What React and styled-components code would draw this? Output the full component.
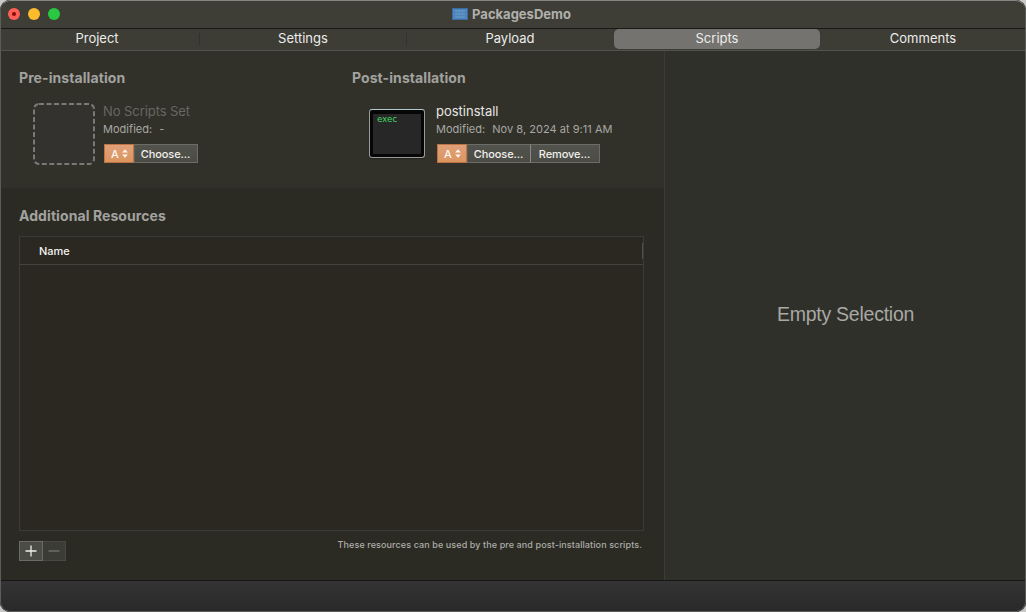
import React from "react";
import styled, { createGlobalStyle } from "styled-components";

const GlobalStyle = createGlobalStyle`
  * { box-sizing: border-box; }
  body { margin: 0; background: #c9c9c7; font-family: Inter, "Liberation Sans", sans-serif; }
`;

const Window = styled.div`
  position: relative;
  display: flex;
  flex-direction: column;
  width: 1026px;
  height: 612px;
  overflow: hidden;
  border-radius: 10px;
  background: #30302a;

  &::after {
    content: "";
    position: absolute;
    inset: 0;
    z-index: 2;
    border: 1px solid #5c5d59;
    border-top-color: #858681;
    border-radius: 10px;
    pointer-events: none;
  }
`;

const TitleBar = styled.header`
  display: grid;
  grid-template-columns: 1fr auto 1fr;
  align-items: center;
  height: 29px;
  padding: 0 11px 0 8px;
  border-bottom: 1px solid #191917;
  background: #3e3e37;
`;

const Lights = styled.div`
  display: flex;
  gap: 8px;
`;

const Light = styled.span`
  display: grid;
  place-items: center;
  width: 12px;
  height: 12px;
  border-radius: 50%;
  background: ${(p) => p.$color};
`;

const EditedDot = styled.span`
  width: 4px;
  height: 4px;
  border-radius: 50%;
  background: #8a0a06;
`;

const Title = styled.h1`
  display: flex;
  align-items: center;
  gap: 4px;
  margin: 0;
  padding-bottom: 1px;
  color: #b0b0ac;
  font-size: 13px;
  font-weight: 700;
  line-height: 16px;
`;

const Tabs = styled.nav`
  display: grid;
  grid-template-columns: 200px 207px 207px 206px 206px;
  height: 21px;
  background: #3d3d36;
  box-shadow: 0 1px 0 #52534d;
  z-index: 1;
`;

const Tab = styled.button`
  display: flex;
  align-items: center;
  justify-content: center;
  height: 20px;
  padding: 0 ${(p) => p.$inset || 0}px 2px 0;
  border: 0;
  border-radius: ${(p) => (p.$active ? 5 : 0)}px;
  background: ${(p) =>
    p.$active
      ? "#747370"
      : p.$divider
        ? "linear-gradient(#30302c, #30302c) right 4px / 1px 12px no-repeat"
        : "none"};
  color: #ececea;
  font: 400 13px/16px Inter, sans-serif;
`;

const Body = styled.div`
  display: flex;
  flex: 1;
  min-height: 0;
`;

const Main = styled.main`
  display: flex;
  flex-direction: column;
  width: 665px;
  border-right: 1px solid #3b3b37;
  background: #2b2b24;
`;

const ScriptsSection = styled.section`
  display: grid;
  grid-template-columns: 333px 1fr;
  height: 138px;
  padding: 20px 0 0 19px;
  border-bottom: 1px solid #2f2f2b;
  background: #31312a;
`;

const Heading = styled.h2`
  margin: 0;
  color: #a2a29e;
  font-size: 14px;
  font-weight: 700;
  line-height: 16px;
  letter-spacing: 0.08px;
`;

const ScriptRow = styled.div`
  display: flex;
  gap: ${(p) => p.$gap}px;
  padding: 17px 0 0 ${(p) => p.$indent}px;
`;

const DropZone = styled.svg`
  display: block;
  width: 62px;
  height: 62px;
`;

const ExecIcon = styled.div`
  width: 56px;
  height: 49px;
  margin-top: 6px;
  padding: 3px 5px 0 7px;
  border: 1px solid #9a9b9a;
  border-top-color: #b3c9d0;
  border-radius: 3px;
  background: linear-gradient(#272727, #272727) 3px 4px / 48px 40px no-repeat #060606;
  box-shadow: 0 1px 1px #22221f;
  color: #43d565;
  font: 9px/13px "DejaVu Sans Mono", monospace;
  letter-spacing: -0.4px;
`;

const Details = styled.div`
  display: flex;
  flex-direction: column;
`;

const ScriptName = styled.div`
  color: ${(p) => (p.$empty ? "#676762" : "#e6e6e3")};
  font-size: 13px;
  line-height: 16px;
  letter-spacing: ${(p) => (p.$empty ? -0.07 : 0)}px;
`;

const Modified = styled.div`
  display: flex;
  gap: 7px;
  margin: 3px 0 8px;
  color: #a8a8a3;
  font-size: 11px;
  line-height: 14px;
  letter-spacing: 0.03px;
  white-space: nowrap;
`;

const ButtonGroup = styled.div`
  display: flex;
  height: 19px;
  margin-left: 1px;
`;

const PathMode = styled.button`
  display: flex;
  align-items: center;
  justify-content: center;
  gap: 3px;
  width: 30px;
  height: 19px;
  padding: 0 0 0 1px;
  border: 1px solid #bd7445;
  background: linear-gradient(#e0a079, #dc955f);
  color: #fff7f0;
  font: 500 11px/14px Inter, sans-serif;
`;

const ActionButton = styled.button`
  width: ${(p) => p.$width}px;
  height: 19px;
  padding: 0 1px 0 0;
  border: 1px solid #6c6c67;
  border-left-color: ${(p) => (p.$split ? "#8a8a85" : "#5e5e59")};
  border-right-width: ${(p) => (p.$joined ? 0 : 1)}px;
  background: linear-gradient(#53534e, #4c4c46);
  color: #f0f0ed;
  font: 500 11px/14px Inter, sans-serif;
  letter-spacing: -0.1px;
`;

const Resources = styled.section`
  display: flex;
  flex: 1;
  flex-direction: column;
  padding: 20px 20px 19px 19px;
`;

const Table = styled.div`
  width: 625px;
  height: 295px;
  margin-top: 12px;
  border: 1px solid #3b3c39;
  background: #2b2721;
`;

const TableHeader = styled.div`
  display: flex;
  align-items: center;
  justify-content: space-between;
  height: 28px;
  padding-left: 19px;
  border-bottom: 1px solid #43423c;
  color: #f4f4f1;
  font-size: 11px;
  font-weight: 500;
`;

const ColumnGrip = styled.span`
  width: 1px;
  height: 16px;
  background: #50504a;
`;

const TableFooter = styled.div`
  display: flex;
  justify-content: space-between;
  width: 623px;
  padding-top: 10px;
`;

const EditButtons = styled.div`
  display: flex;
`;

const EditButton = styled.button`
  display: grid;
  place-items: center;
  width: ${(p) => (p.$disabled ? 23 : 24)}px;
  height: 20px;
  padding: 0;
  border: 1px solid ${(p) => (p.$disabled ? "#484943" : "#6a6b65")};
  border-left-width: ${(p) => (p.$disabled ? 0 : 1)}px;
  background: ${(p) => (p.$disabled ? "#3b3c35" : "#4b4c46")};
  color: ${(p) => (p.$disabled ? "#6d6e68" : "#efefec")};
`;

const Note = styled.p`
  margin: -2px 0 0;
  color: #adada8;
  font-size: 9px;
  font-weight: 500;
  line-height: 12px;
  letter-spacing: 0.1px;
`;

const Inspector = styled.aside`
  display: flex;
  flex: 1;
  align-items: center;
  justify-content: center;
  padding-bottom: 2px;
  background: #30302a;
`;

const EmptyLabel = styled.p`
  margin: 0;
  color: #a8a8a4;
  font: 400 19.5px/24px "Liberation Sans", Arial, sans-serif;
  letter-spacing: -0.25px;
`;

const StatusBar = styled.footer`
  height: 32px;
  border-top: 1px solid #151514;
  background: linear-gradient(#343434, #292929);
`;

const Arrows = () => (
  <svg width="6" height="9" viewBox="0 0 6 9" fill="currentColor">
    <path d="M3 .2 5.9 3.5H.1zM3 8.8.1 5.5h5.8z" />
  </svg>
);

const ProjectIcon = () => (
  <svg width="16" height="12" viewBox="0 0 16 12">
    <rect x=".5" y=".5" width="15" height="11" fill="#4f86bd" stroke="#3b6b9d" />
    <path d="M3 3h10M3 6h10M3 9h10M5 2v8M8 2v8M11 2v8" stroke="#80a9d2" strokeWidth=".5" strokeDasharray="2 1" fill="none" />
  </svg>
);

export default function App() {
  return (
    <>
      <GlobalStyle />
      <Window>
        <TitleBar>
          <Lights>
            <Light $color="#fe5f57"><EditedDot /></Light>
            <Light $color="#febb2e" />
            <Light $color="#28c840" />
          </Lights>
          <Title><ProjectIcon />PackagesDemo</Title>
        </TitleBar>
        <Tabs>
          <Tab $divider $inset={6}>Project</Tab>
          <Tab $divider $inset={1}>Settings</Tab>
          <Tab $inset={1}>Payload</Tab>
          <Tab $active>Scripts</Tab>
          <Tab>Comments</Tab>
        </Tabs>
        <Body>
          <Main>
            <ScriptsSection>
              <div>
                <Heading>Pre-installation</Heading>
                <ScriptRow $indent={14} $gap={8}>
                  <DropZone viewBox="0 0 62 62">
                    <rect x="1" y="1" width="60" height="60" rx="5" fill="#33322f" stroke="#797975" strokeWidth="2" strokeDasharray="5 2.5" />
                  </DropZone>
                  <Details>
                    <ScriptName $empty>No Scripts Set</ScriptName>
                    <Modified><span>Modified:</span><span>-</span></Modified>
                    <ButtonGroup>
                      <PathMode>A<Arrows /></PathMode>
                      <ActionButton $width={64}>Choose...</ActionButton>
                    </ButtonGroup>
                  </Details>
                </ScriptRow>
              </div>
              <div>
                <Heading>Post-installation</Heading>
                <ScriptRow $indent={17} $gap={11}>
                  <ExecIcon>exec</ExecIcon>
                  <Details>
                    <ScriptName>postinstall</ScriptName>
                    <Modified><span>Modified:</span><span>Nov 8, 2024 at 9:11 AM</span></Modified>
                    <ButtonGroup>
                      <PathMode>A<Arrows /></PathMode>
                      <ActionButton $width={63} $joined>Choose...</ActionButton>
                      <ActionButton $width={70} $split>Remove...</ActionButton>
                    </ButtonGroup>
                  </Details>
                </ScriptRow>
              </div>
            </ScriptsSection>
            <Resources>
              <Heading>Additional Resources</Heading>
              <Table>
                <TableHeader>Name<ColumnGrip /></TableHeader>
              </Table>
              <TableFooter>
                <EditButtons>
                  <EditButton>
                    <svg width="12" height="12"><path d="M.5 6h11M6 .5v11" stroke="currentColor" strokeWidth="1.3" /></svg>
                  </EditButton>
                  <EditButton $disabled>
                    <svg width="12" height="12"><path d="M.5 6h11" stroke="currentColor" strokeWidth="1.3" /></svg>
                  </EditButton>
                </EditButtons>
                <Note>These resources can be used by the pre and post-installation scripts.</Note>
              </TableFooter>
            </Resources>
          </Main>
          <Inspector>
            <EmptyLabel>Empty Selection</EmptyLabel>
          </Inspector>
        </Body>
        <StatusBar />
      </Window>
    </>
  );
}
